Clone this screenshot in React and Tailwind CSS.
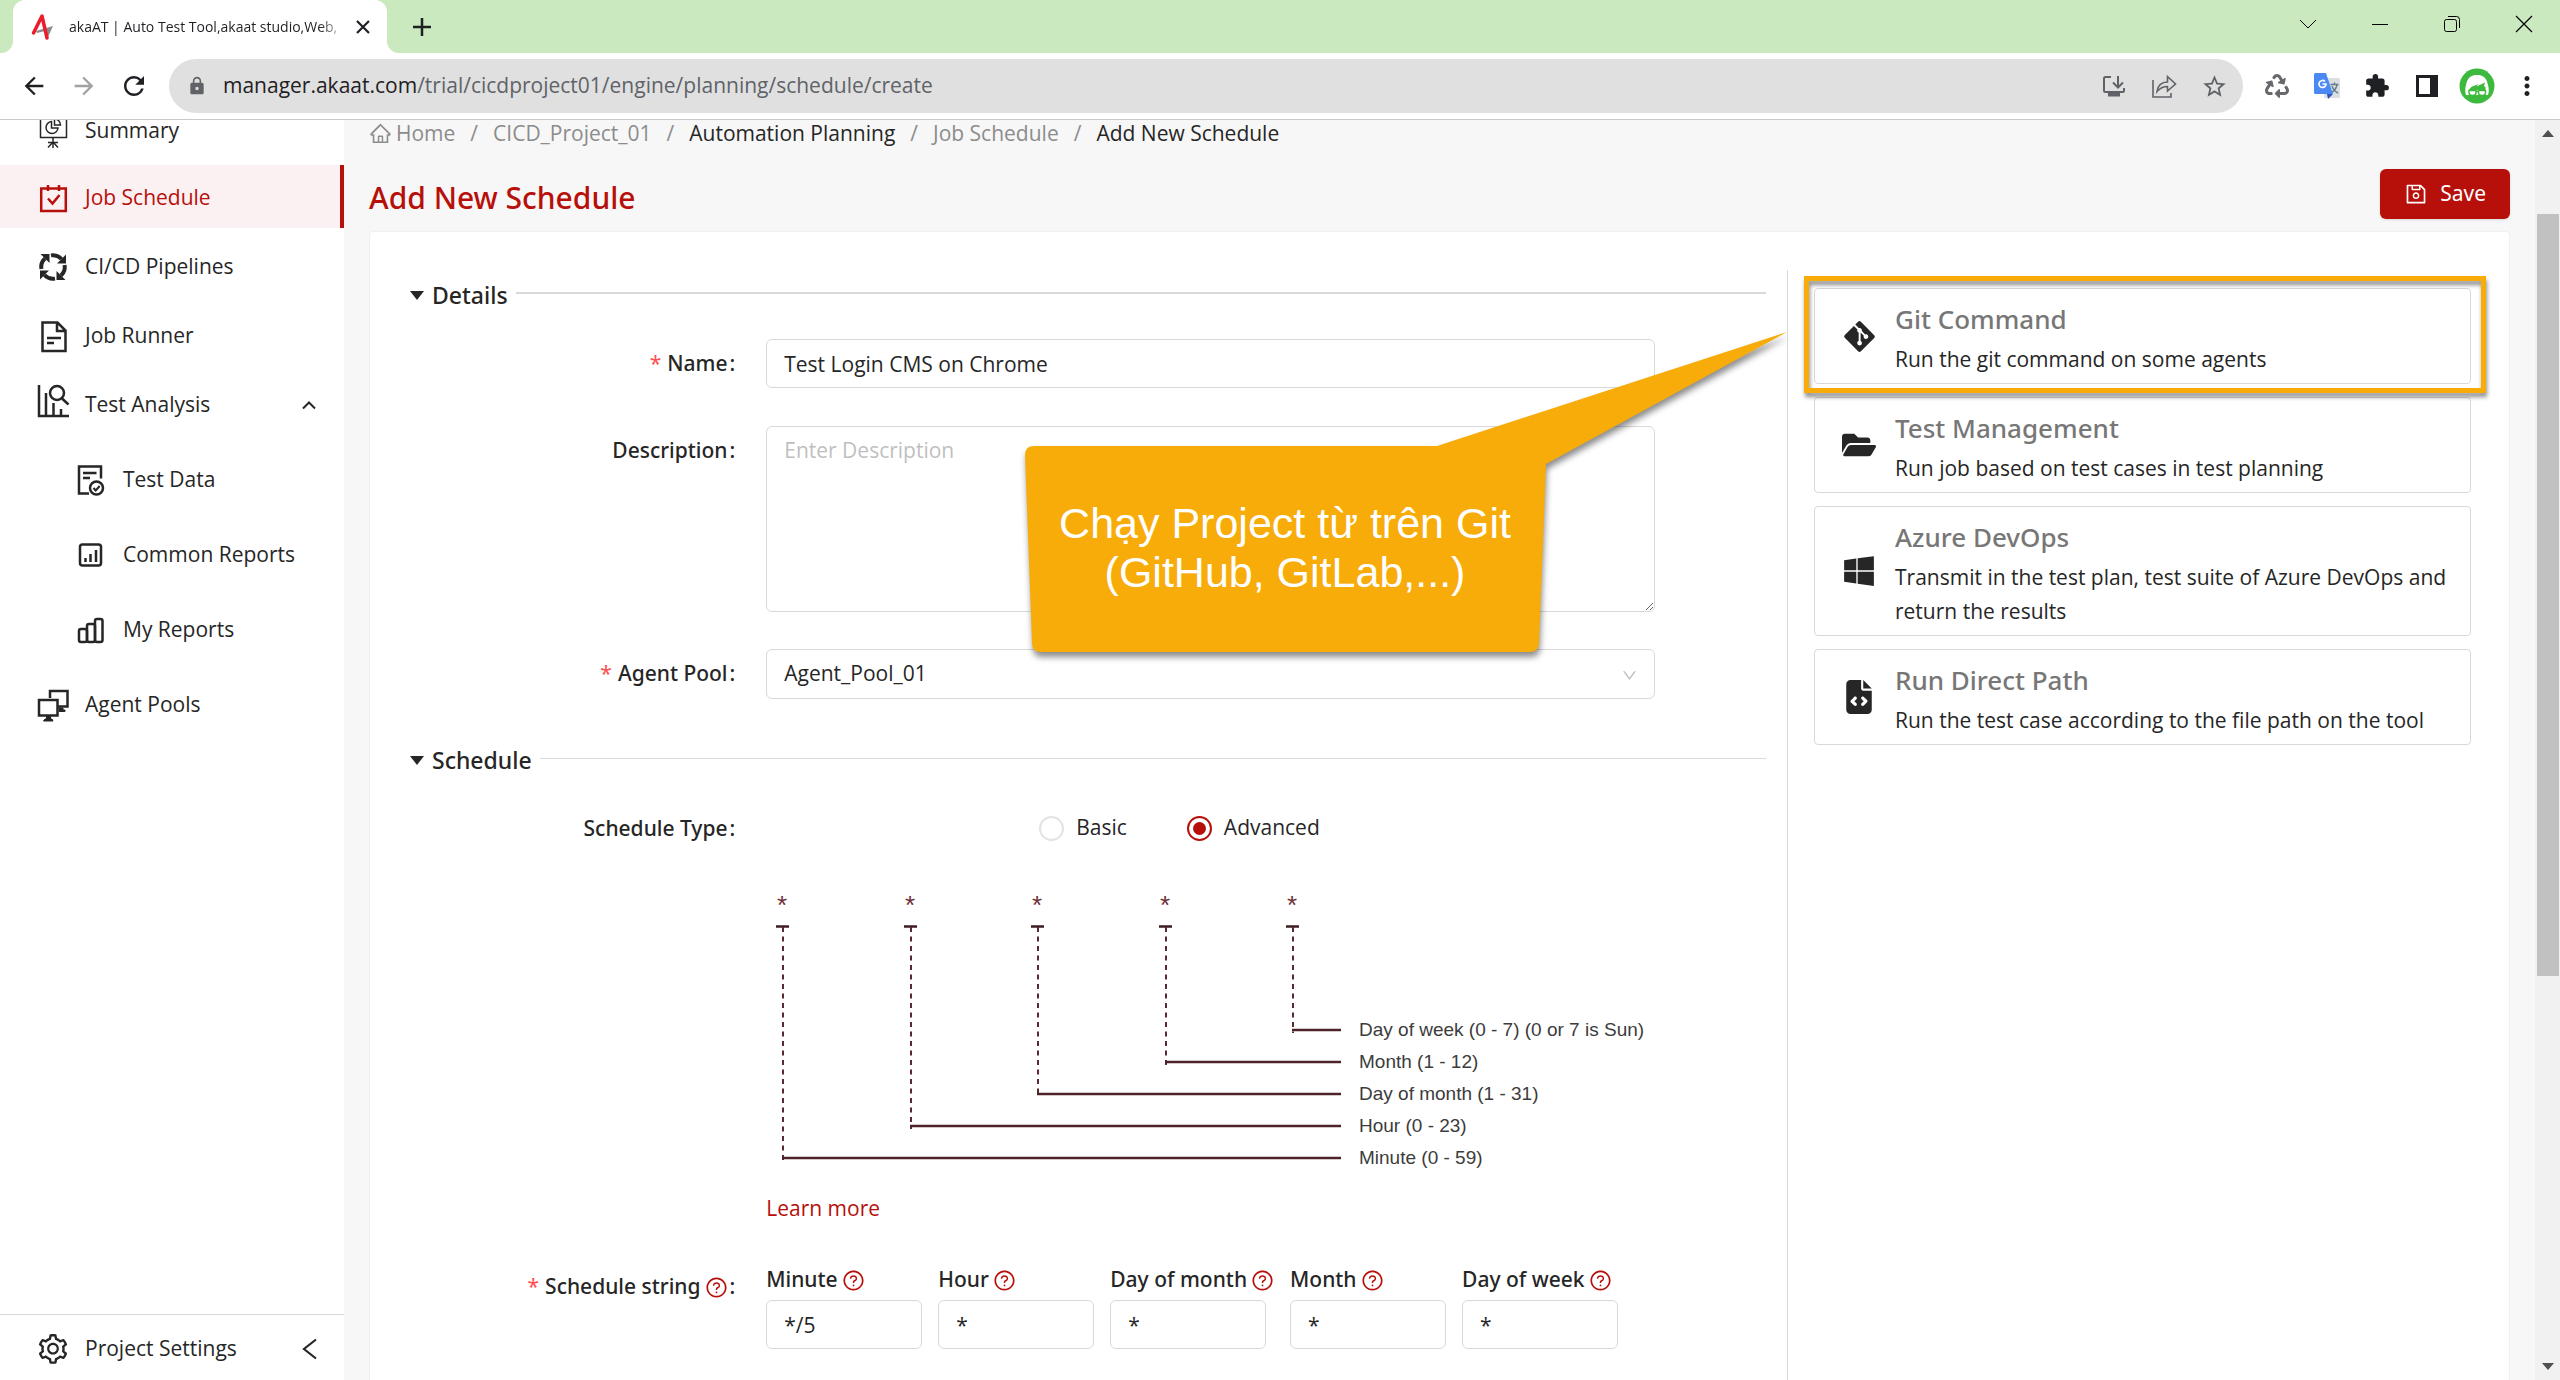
import React, { useState } from 'react';
import {
  AiOutlineDown,
  AiOutlineHome,
  AiOutlineQuestionCircle,
  AiOutlineSave,
  AiOutlineSetting,
} from 'react-icons/ai';
import { FaFolderOpen, FaGitAlt, FaRecycle, FaWindows } from 'react-icons/fa';
import { FaFileCode } from 'react-icons/fa6';
import { MdArrowBack, MdArrowForward, MdExtension, MdLock, MdMoreVert, MdRefresh, MdStarBorder } from 'react-icons/md';

const lineIcon = { fill: 'none', stroke: 'currentColor', strokeWidth: 2.5 };

/* ---------- Sidebar icons ---------- */

const SummaryIcon = () => (
  <svg width="32" height="36" viewBox="0 0 32 36" {...lineIcon} strokeWidth="1.5">
    <path d="M1.5 1h29M3.5 1v23.5h26V1M16 25v4M11 34.5l5-5.5 5 5.5M16 29v6M11 29.5h10" />
    <path d="M14.5 8.5a6 6 0 1 0 6.5 6.5h-6.5z" />
    <path d="M17.5 6v6h6a6 6 0 0 0-6-6z" />
  </svg>
);

const CalendarIcon = () => (
  <svg width="32" height="32" viewBox="0 0 32 32" {...lineIcon}>
    <path d="M4.2 6.5h24.6v22.5H4.2zM11 3v6M22 3v6M11 16.5l4.5 5 7-8.5" />
  </svg>
);

const CycleIcon = () => (
  <svg width="32" height="32" viewBox="-16 -16 32 32">
    {[0, 90, 180, 270].map((angle) => (
      <g key={angle} transform={`rotate(${angle})`}>
        <path d="M-2-11.6A11.6 11.6 0 0 1 8.5-8" fill="none" stroke="currentColor" strokeWidth="4" />
        <path d="M13-12.5v9H4z" fill="currentColor" />
      </g>
    ))}
  </svg>
);

const DocumentIcon = () => (
  <svg width="32" height="34" viewBox="0 0 32 34" {...lineIcon}>
    <path d="M5.5 3.5H20.5l8 8V32H5.5zM20 3.5v8.5h8.5M10 19h14M10 24h7" />
  </svg>
);

const AnalysisIcon = () => (
  <svg width="34" height="44" viewBox="0 0 34 44" {...lineIcon}>
    <path d="M3 2v31h30M10 10v23M17.5 20v13M25 26v7M26 15.5l6.5 6" />
    <circle cx="21" cy="10" r="7" />
  </svg>
);

const TestDataIcon = () => (
  <svg width="32" height="32" viewBox="0 0 32 32" {...lineIcon}>
    <path d="M14 29.5H4V2.5h22v12M8 9h13.5M8 14h7" />
    <circle cx="21.5" cy="24" r="6.5" />
    <path d="M18.5 24l2.2 2.5 4-4.5" strokeWidth="2" />
  </svg>
);

const CommonReportIcon = () => (
  <svg width="32" height="32" viewBox="0 0 32 32" {...lineIcon}>
    <rect x="5" y="5.5" width="21" height="21" rx="2.5" />
    <path d="M10.5 19v4M15.5 15v8M21 11v12" />
  </svg>
);

const MyReportIcon = () => (
  <svg width="32" height="32" viewBox="0 0 32 32" {...lineIcon}>
    <rect x="4" y="15" width="8" height="13" rx="2" />
    <rect x="12" y="10" width="8" height="18" rx="2" />
    <rect x="20" y="5" width="7.5" height="23" rx="2" />
  </svg>
);

const PoolsIcon = () => (
  <svg width="34" height="34" viewBox="0 0 34 34" {...lineIcon}>
    <path d="M14 10V3h17.5v15.5H22" />
    <path d="M3 12h18.5v15.5H3z" />
    <path d="M9 31h7l1 2H7.5zM10.5 28h4v3h-4zM23 20h4v2h2v1.5h-6z" fill="currentColor" strokeWidth="1" />
  </svg>
);

const navItems = [
  { label: 'Summary', icon: SummaryIcon, space: '-mt-[22px]' },
  { label: 'Job Schedule', icon: CalendarIcon, space: 'mt-1', active: true },
  { label: 'CI/CD Pipelines', icon: CycleIcon, space: 'mt-1.5' },
  { label: 'Job Runner', icon: DocumentIcon, space: 'mt-1.5' },
  { label: 'Test Analysis', icon: AnalysisIcon, space: 'mt-1.5', open: true },
  { label: 'Test Data', icon: TestDataIcon, space: 'mt-3', sub: true },
  { label: 'Common Reports', icon: CommonReportIcon, space: 'mt-3', sub: true },
  { label: 'My Reports', icon: MyReportIcon, space: 'mt-3', sub: true },
  { label: 'Agent Pools', icon: PoolsIcon, space: 'mt-3' },
];

const crumbs = [
  { label: 'CICD_Project_01', color: 'text-[#8c8c8c]' },
  { label: 'Automation Planning', color: 'text-[#262626]' },
  { label: 'Job Schedule', color: 'text-[#8c8c8c]' },
  { label: 'Add New Schedule', color: 'text-[#262626]' },
];

const commands = [
  { title: 'Git Command', text: 'Run the git command on some agents', icon: FaGitAlt, size: 35, highlight: true },
  { title: 'Test Management', text: 'Run job based on test cases in test planning', icon: FaFolderOpen, size: 34 },
  {
    title: 'Azure DevOps',
    text: 'Transmit in the test plan, test suite of Azure DevOps and return the results',
    icon: FaWindows,
    size: 34,
  },
  {
    title: 'Run Direct Path',
    text: 'Run the test case according to the file path on the tool',
    icon: FaFileCode,
    size: 34,
  },
];

const cronFields = [
  { id: 'minute', label: 'Minute', value: '*/5' },
  { id: 'hour', label: 'Hour', value: '*' },
  { id: 'dom', label: 'Day of month', value: '*' },
  { id: 'month', label: 'Month', value: '*' },
  { id: 'dow', label: 'Day of week', value: '*' },
];

const cronLines = [
  { x: 16, y: 290, text: 'Minute (0 - 59)' },
  { x: 144, y: 258, text: 'Hour (0 - 23)' },
  { x: 271, y: 226, text: 'Day of month (1 - 31)' },
  { x: 399, y: 194, text: 'Month (1 - 12)' },
  { x: 526, y: 162, text: 'Day of week (0 - 7) (0 or 7 is Sun)' },
];

/* ---------- Browser window ---------- */

function TabStrip() {
  return (
    <div className="flex h-[53px] shrink-0 items-center bg-[#cae9be] pl-[13px] text-[#1f2023]">
      <div className="relative flex h-full w-[374px] items-center rounded-t-xl bg-white pr-3 pl-[18px]">
        <svg className="absolute bottom-0 -left-3" width="12" height="12" viewBox="0 0 12 12">
          <path d="M12 0v12H0A12 12 0 0 0 12 0z" fill="#fff" />
        </svg>
        <svg className="absolute -right-3 bottom-0" width="12" height="12" viewBox="0 0 12 12">
          <path d="M0 0v12h12A12 12 0 0 1 0 0z" fill="#fff" />
        </svg>
        <svg className="shrink-0" width="24" height="28" viewBox="0 0 24 28">
          <path d="M5 18l17-5-5 11-3-6-8 2z" fill="#8a8d90" />
          <path
            d="M2.5 20L11 3l5 22"
            fill="none"
            stroke="#ec1c2b"
            strokeWidth="3.5"
            strokeLinejoin="round"
            strokeLinecap="round"
          />
        </svg>
        <span className="ml-3.5 flex-1 overflow-hidden bg-gradient-to-r from-[#1f2023] from-90% to-transparent bg-clip-text text-[14px] whitespace-nowrap text-transparent">
          akaAT | Auto Test Tool,akaat studio,Web,
        </span>
        <button type="button" aria-label="Close tab" className="ml-1 flex h-6 w-6 items-center justify-center">
          <svg width="14" height="14" viewBox="0 0 14 14" stroke="currentColor" strokeWidth="2.2">
            <path d="M1 1l12 12M13 1L1 13" />
          </svg>
        </button>
      </div>
      <button type="button" aria-label="New tab" className="ml-6 p-0.5">
        <svg width="18" height="18" viewBox="0 0 18 18" stroke="currentColor" strokeWidth="2.5">
          <path d="M9 0v18M0 9h18" />
        </svg>
      </button>
      <div className="mb-1.5 ml-auto flex text-black">
        <button type="button" aria-label="Search tabs" className="flex w-[72px] justify-center">
          <svg width="18" height="18" viewBox="0 0 18 18" fill="none" stroke="currentColor">
            <path d="M1 5l8 8 8-8" />
          </svg>
        </button>
        <button type="button" aria-label="Minimize" className="flex w-[72px] justify-center">
          <svg width="18" height="18" viewBox="0 0 18 18" stroke="currentColor">
            <path d="M1 9.5h16" />
          </svg>
        </button>
        <button type="button" aria-label="Restore" className="flex w-[72px] justify-center">
          <svg width="18" height="18" viewBox="0 0 18 18" fill="none" stroke="currentColor">
            <rect x="1.5" y="4.5" width="12" height="12" rx="2" />
            <path d="M5 1.5h8.5a3 3 0 0 1 3 3V13" />
          </svg>
        </button>
        <button type="button" aria-label="Close" className="flex w-[72px] justify-center">
          <svg width="18" height="18" viewBox="0 0 18 18" stroke="currentColor" strokeWidth="1.2">
            <path d="M1 1l16 16M17 1L1 17" />
          </svg>
        </button>
      </div>
    </div>
  );
}

const chromeButton = 'flex h-[50px] w-[50px] items-center justify-center';

function Toolbar() {
  return (
    <div className="flex h-[67px] shrink-0 items-center border-b border-[#c9c9c9] bg-white pr-2 pl-[9px] text-[#1f2023]">
      <button type="button" aria-label="Back" className={chromeButton}>
        <MdArrowBack size={28} />
      </button>
      <button type="button" aria-label="Forward" className={chromeButton}>
        <MdArrowForward size={28} className="text-[#a0a1a3]" />
      </button>
      <button type="button" aria-label="Reload" className={chromeButton}>
        <MdRefresh size={30} />
      </button>
      <div className="ml-2.5 flex h-[54px] flex-1 items-center rounded-full bg-[#e0e0e0] pr-1 pl-[18px] text-[#5f6368]">
        <MdLock size={20} />
        <a href="#address" className="ml-4 flex-1 truncate text-[21px]">
          <span className="text-[#1f2023]">manager.akaat.com</span>/trial/cicdproject01/engine/planning/schedule/create
        </a>
        <button type="button" aria-label="Install" className={chromeButton}>
          <svg width="24" height="24" viewBox="0 0 24 24" fill="none" stroke="currentColor" strokeWidth="2">
            <path d="M9 3H3.5a1.500 1.500 0 0 0-1.500 1.500v12A1.500 1.500 0 0 0 3.500 18h17a1.500 1.500 0 0 0 1.500-1.500V14M16 2v11M11 8.500l5 5 5-5" />
            <path d="M6 20.5h12" strokeWidth="4" />
          </svg>
        </button>
        <button type="button" aria-label="Share" className={chromeButton}>
          <svg width="26" height="26" viewBox="0 0 26 26" fill="none" stroke="currentColor" strokeWidth="1.6">
            <path d="M2 7v17h18v-4M6 18.5c1-6.500 4.500-9.500 10.500-9.500V3.500L24.500 11l-8 7v-4.500c-4.500 0-7.500 1.500-10.500 5z" />
          </svg>
        </button>
        <button type="button" aria-label="Bookmark" className={chromeButton}>
          <MdStarBorder size={27} />
        </button>
      </div>
      <div className="ml-[9px] flex">
        <button type="button" aria-label="Recycle" className={chromeButton}>
          <FaRecycle size={24} className="text-[#66686b]" />
        </button>
        <button type="button" aria-label="Translate" className={chromeButton}>
          <svg width="26" height="26" viewBox="0 0 26 26">
            <rect x="10" y="5" width="16" height="20" rx="1.5" fill="#dcdee0" />
            <path
              d="M16.500 11.500h8M20.500 9.500v2M23 12c-1 4-3.500 6.500-6 8M18 13c1 3 3 5.500 6 7"
              fill="none"
              stroke="#607d8b"
              strokeWidth="1.4"
            />
            <path d="M13 21h6l-5 5z" fill="#2b50c0" />
            <path d="M1.500 0h10.500l7 21H1.500A1.500 1.500 0 0 1 0 19.500v-18A1.500 1.500 0 0 1 1.500 0z" fill="#4a89f3" />
            <path d="M11 8.500a3.500 3.500 0 1 0 1 2.500H8.500" fill="none" stroke="#fff" strokeWidth="1.7" />
          </svg>
        </button>
        <button type="button" aria-label="Extensions" className={chromeButton}>
          <MdExtension size={26} />
        </button>
        <button type="button" aria-label="Side panel" className={chromeButton}>
          <svg width="24" height="24" viewBox="0 0 24 24">
            <path d="M1 1h22v22H1zM4 4v16h11V4z" fill="currentColor" fillRule="evenodd" />
          </svg>
        </button>
        <button type="button" aria-label="Profile" className={chromeButton}>
          <svg width="36" height="36" viewBox="0 0 36 36">
            <circle cx="18" cy="18" r="17.5" fill="#3dba3d" />
            <path d="M7 27c-1-3-1-6 0-10C8.500 9.500 12 7 18 7s9.500 2.500 11 10c1 4 1 7 0 10z" fill="#fff" />
            <path d="M10 22c2-4 5-4 9.500-6l-2 2.500 8.500-4-1 3.500 1.500 1v3z" fill="#3dba3d" />
            <g fill="none" stroke="#3dba3d" strokeWidth="1.5">
              <path d="M10 22.500h7v2a3.500 3 0 0 1-7 0zM19.500 22.500h7v2a3.500 3 0 0 1-7 0zM17 23.500h2.500" />
            </g>
          </svg>
        </button>
        <button type="button" aria-label="Menu" className={chromeButton}>
          <MdMoreVert size={30} />
        </button>
      </div>
    </div>
  );
}

function Scrollbar() {
  return (
    <div className="flex w-[25px] shrink-0 flex-col items-center bg-[#f1f1f1] py-2.5 text-[#505050]">
      <svg width="12" height="7" viewBox="0 0 12 7" fill="currentColor">
        <path d="M6 0l6 7H0z" />
      </svg>
      <div className="mt-[77px] h-[762px] w-[22px] bg-[#c1c1c1]" />
      <svg className="mt-auto" width="12" height="7" viewBox="0 0 12 7" fill="currentColor">
        <path d="M0 0h12L6 7z" />
      </svg>
    </div>
  );
}

/* ---------- Application ---------- */

function Sidebar() {
  return (
    <aside className="flex w-[345px] shrink-0 flex-col border-r border-[#f7f7f7] bg-white text-[21px] text-[#262626]">
      <nav className="flex-1 overflow-hidden">
        {navItems.map(({ label, icon: Icon, space, active, open, sub }) => (
          <a
            key={label}
            href="#nav"
            className={`flex h-[63px] items-center border-r-4 pt-0.5 ${space} ${sub ? 'pl-[74px]' : 'pl-9'} ${
              active ? 'border-[#b70f0a] bg-[#fbf1f2] text-[#b70f0a]' : 'border-transparent'
            }`}
          >
            <span className="flex w-[34px] shrink-0 justify-center">
              <Icon />
            </span>
            <span className="ml-[15px]">{label}</span>
            {open && (
              <svg className="mr-6 ml-auto" width="14" height="10" viewBox="0 0 14 10" {...lineIcon} strokeWidth="2">
                <path d="M1 8.5l6-6 6 6" />
              </svg>
            )}
          </a>
        ))}
      </nav>
      <div className="flex h-[66px] items-center border-t border-[#d9d9d9] pt-0.5 pr-6 pl-9">
        <a href="#settings" className="flex flex-1 items-center">
          <AiOutlineSetting size={34} />
          <span className="ml-[15px]">Project Settings</span>
        </a>
        <button type="button" aria-label="Collapse" className="pr-0.5">
          <svg width="16" height="22" viewBox="0 0 16 22" {...lineIcon} strokeWidth="2.2">
            <path d="M14 1.5L2 11l12 9.5" />
          </svg>
        </button>
      </div>
    </aside>
  );
}

function Breadcrumb() {
  return (
    <nav className="flex h-[27px] items-center text-[21px] text-[#8c8c8c]">
      <a href="#home" className="flex items-center gap-1">
        <AiOutlineHome size={23} />
        Home
      </a>
      {crumbs.map(({ label, color }) => (
        <React.Fragment key={label}>
          <span className="mx-[15px]">/</span>
          <a href="#crumb" className={color}>
            {label}
          </a>
        </React.Fragment>
      ))}
    </nav>
  );
}

function SectionTitle({ children, line }) {
  return (
    <div className="flex h-[34px] items-center">
      <svg className="mb-1" width="14" height="9" viewBox="0 0 14 9">
        <path d="M0 0h14L7 9z" fill="#262626" />
      </svg>
      <h2 className="mb-1 ml-2 font-['Noto_Sans',sans-serif] text-[23px] font-medium">{children}</h2>
      <div className={`mb-2 ml-2 flex-1 border-[#d9d9d9] ${line}`} />
    </div>
  );
}

function HelpIcon() {
  return <AiOutlineQuestionCircle size={23} className="shrink-0 text-[#b70f0a]" />;
}

function FormRow({ id, label, required, help, children }) {
  return (
    <div className="flex items-start pl-[23px]">
      <label
        htmlFor={id}
        className="flex h-[50px] w-1/4 items-center justify-end pr-[31px] font-['Noto_Sans',sans-serif] text-[21px] font-medium"
      >
        {required && <span className="mr-1.5 font-normal text-[#ff4d4f]">*</span>}
        {label}
        {help && (
          <span className="ml-1">
            <HelpIcon />
          </span>
        )}
        <span className="ml-0.5">:</span>
      </label>
      <div className="w-2/3">{children}</div>
    </div>
  );
}

function CronDiagram() {
  return (
    <svg className="block" width="890" height="308" viewBox="0 0 890 308" fontFamily="Liberation Sans, Arial, sans-serif">
      {cronLines.map(({ x, y, text }) => (
        <g key={text}>
          <text x={x} y="46" textAnchor="middle" fontSize="26" fill="#6d3038">
            *
          </text>
          <path d={`M${x - 6} 58.5h13`} stroke="#3e1c22" strokeWidth="2.5" />
          <path d={`M${x + 1} 59V${y + 3}`} stroke="#5b2a31" strokeWidth="2" strokeDasharray="5 4.5" />
          <path d={`M${x} ${y}H575`} stroke="#4d2229" strokeWidth="2.5" />
          <text x="593" y={y + 6} fontSize="19" fill="#3c3c3c">
            {text}
          </text>
        </g>
      ))}
    </svg>
  );
}

function Callout() {
  return (
    <div className="absolute top-[55px] -right-[3px] h-[345px] w-[770px]">
      <svg
        className="block drop-shadow-[1px_5px_3px_rgba(0,0,0,0.45)]"
        width="770"
        height="345"
        viewBox="0 0 770 345"
        fill="#f8ac0a"
      >
        <path d="M14 121H417L767 7 526 139 519 319Q518 327 510 327H21Q12 327 12 318L5 130Q5 121 14 121z" />
      </svg>
      <p className="absolute top-[174px] left-[5px] w-[520px] text-center font-['Liberation_Sans',Arial,sans-serif] text-[43px] leading-[49px] text-white">
        Chạy Project từ trên Git
        <br />
        (GitHub, GitLab,...)
      </p>
    </div>
  );
}

const fieldBox = 'w-full rounded-md border border-[#d9d9d9] bg-white px-[17px] text-[21px] text-[#262626]';

function ScheduleForm() {
  const [scheduleType, setScheduleType] = useState('advanced');

  return (
    <form className="relative w-2/3 border-r border-[#d9d9d9] pt-2.5 pr-[21px] pl-4">
      <SectionTitle line="border-t-2">Details</SectionTitle>
      <div className="mt-[25px] flex flex-col gap-[37px]">
        <FormRow id="name" label="Name" required>
          <input id="name" className={`${fieldBox} block h-[49px]`} defaultValue="Test Login CMS on Chrome" />
        </FormRow>
        <FormRow id="description" label="Description">
          <textarea
            id="description"
            placeholder="Enter Description"
            className={`${fieldBox} block h-[186px] resize-y py-2 placeholder:text-[#bfbfbf]`}
          />
        </FormRow>
        <FormRow id="pool" label="Agent Pool" required>
          <div className="relative">
            <select id="pool" className={`${fieldBox} block h-[50px] appearance-none`}>
              <option>Agent_Pool_01</option>
            </select>
            <AiOutlineDown size={17} className="pointer-events-none absolute top-[18px] right-[17px] text-[#bfbfbf]" />
          </div>
        </FormRow>
      </div>

      <div className="mt-[46px]">
        <SectionTitle line="border-t">Schedule</SectionTitle>
      </div>
      <div className="mt-[25px]">
        <FormRow id="type-basic" label="Schedule Type">
          <div className="flex h-12 items-center gap-[60px] pl-[273px] text-[21px]">
            {['Basic', 'Advanced'].map((name) => (
              <label key={name} className="flex items-center gap-3">
                <input
                  id={`type-${name.toLowerCase()}`}
                  type="radio"
                  name="scheduleType"
                  checked={scheduleType === name.toLowerCase()}
                  onChange={() => setScheduleType(name.toLowerCase())}
                  className="h-[25px] w-[25px] appearance-none rounded-full border-2 border-[#e3e3e3] bg-clip-content p-1 checked:border-[#b70f0a] checked:bg-[#b70f0a]"
                />
                {name}
              </label>
            ))}
          </div>
          <div className="mt-4">
            <CronDiagram />
          </div>
          <a href="#learn" className="mt-4 block h-8 w-fit text-[21px] leading-8 text-[#b70f0a]">
            Learn more
          </a>
        </FormRow>
      </div>
      <div className="mt-[38px]">
        <FormRow id="minute" label="Schedule string" required help>
          <div className="flex gap-4">
            {cronFields.map(({ id, label, value }) => (
              <div key={id}>
                <label
                  htmlFor={id}
                  className="flex h-9 items-center gap-1 font-['Noto_Sans',sans-serif] text-[21px] font-medium"
                >
                  {label}
                  <HelpIcon />
                </label>
                <input
                  id={id}
                  defaultValue={value}
                  className="mt-0.5 block h-[49px] w-[156px] rounded-md border border-[#d9d9d9] px-[17px] text-[21px]"
                />
              </div>
            ))}
          </div>
        </FormRow>
      </div>
      <Callout />
    </form>
  );
}

function CommandList() {
  return (
    <div className="flex w-1/3 flex-col gap-[13px] pt-[18px] pr-3.5 pl-[26px]">
      {commands.map(({ title, text, icon: Icon, size, highlight }) => (
        <div key={title} className="relative">
          <button
            type="button"
            className="flex w-full items-center rounded-sm border border-[#d9d9d9] pr-4 pl-7 text-left"
          >
            <span className="flex w-8 shrink-0 justify-center">
              <Icon size={size} className="shrink-0" />
            </span>
            <span className="ml-5 flex flex-col pt-[13px] pb-[7px]">
              <span className="font-['Noto_Sans',sans-serif] text-[26px] leading-[34px] font-medium text-[#777777]">
                {title}
              </span>
              <span className="mt-1.5 text-[21px] leading-[34px]">{text}</span>
            </span>
          </button>
          {highlight && (
            <div className="pointer-events-none absolute -top-3 -right-[15px] -bottom-[9px] -left-2.5 z-10 border-[5px] border-[#f8ac0a] drop-shadow-[1px_4px_2px_rgba(0,0,0,0.45)]" />
          )}
        </div>
      ))}
    </div>
  );
}

export default function App() {
  return (
    <div className="flex h-screen flex-col overflow-hidden font-['Open_Sans','Noto_Sans',sans-serif] text-[#262626]">
      <TabStrip />
      <Toolbar />
      <div className="flex min-h-0 flex-1 bg-[#f7f7f7]">
        <Sidebar />
        <main className="flex min-w-0 flex-1 flex-col overflow-hidden pr-[25px] pl-6">
          <Breadcrumb />
          <div className="mt-[22px] flex h-[50px] shrink-0 items-center justify-between">
            <h1 className="pt-1.5 font-['Noto_Sans',sans-serif] text-[30px] font-medium text-[#b70f0a]">
              Add New Schedule
            </h1>
            <button
              type="button"
              className="flex h-[50px] items-center gap-3 rounded-md bg-[#b70f0a] px-6 font-['Noto_Sans',sans-serif] text-[21px] text-white shadow-sm"
            >
              <AiOutlineSave size={24} />
              Save
            </button>
          </div>
          <div className="mt-3 flex shrink-0 grow rounded-t border border-b-0 border-[#f0f0f0] bg-white px-6 pt-[38px]">
            <ScheduleForm />
            <CommandList />
          </div>
        </main>
        <Scrollbar />
      </div>
    </div>
  );
}
